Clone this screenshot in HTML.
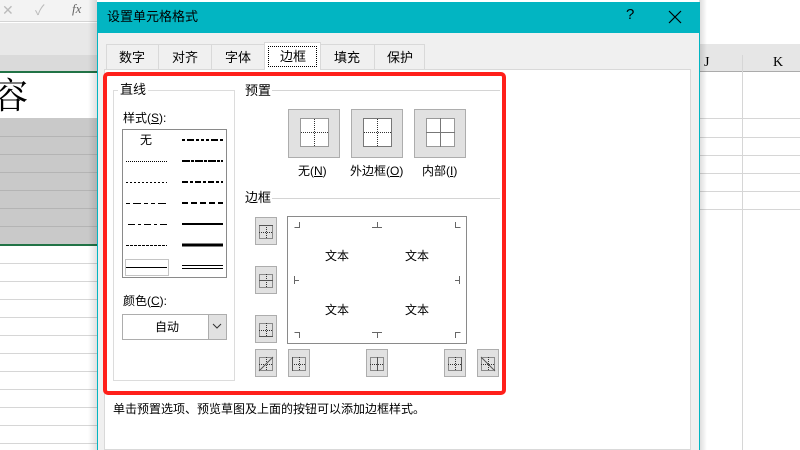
<!DOCTYPE html>
<html><head><meta charset="utf-8"><style>
*{margin:0;padding:0;box-sizing:border-box}
body{width:800px;height:450px;overflow:hidden;position:relative;background:#fff;font-family:"Liberation Sans","Noto Sans CJK SC",sans-serif;font-size:12px;color:#000}
.a{position:absolute}
.t{position:absolute;white-space:nowrap;font-size:12px;line-height:14px}
.btn{position:absolute;background:#e1e1e1;border:1px solid #adadad}
.sb{position:absolute;width:22px;height:28px;background:#e1e1e1;border:1px solid #adadad}
.hl{position:absolute;height:1px;background:#d4d4d4}
svg{shape-rendering:crispEdges}
</style></head><body>
<div class="a" style="left:0;top:0;width:97px;height:22px;background:#f3f3f3;border-bottom:1px solid #d4d4d4"></div>
<div class="t" style="left:2px;top:3px;color:#bbb;font-size:14px">✕</div>
<div class="t" style="left:35px;top:3px;color:#bbb;font-size:14px">✓</div>
<div class="t" style="left:72px;top:2px;color:#666;font-style:italic;font-family:'Liberation Serif',serif;font-size:13px">fx</div>
<div class="a" style="left:0;top:23px;width:97px;height:32px;background:#e8e8e8"></div>
<div class="a" style="left:0;top:55px;width:97px;height:16px;background:#dadada"></div>
<div class="a" style="left:0;top:71px;width:97px;height:2px;background:#217346"></div>
<div class="t" style="left:-8px;top:76px;font-size:36px;line-height:40px;font-family:'Liberation Serif','Noto Serif CJK SC',serif">容</div>
<div class="a" style="left:0;top:118px;width:97px;height:127px;background:#c9c9c9"></div>
<div class="a" style="left:0;top:244px;width:97px;height:2px;background:#217346"></div>
<svg class="a" style="left:0;top:0" width="97" height="450">
<g stroke="#b4b4b4" stroke-width="1">
<line x1="0" y1="136.5" x2="97" y2="136.5"/><line x1="0" y1="154.5" x2="97" y2="154.5"/><line x1="0" y1="172.5" x2="97" y2="172.5"/><line x1="0" y1="190.5" x2="97" y2="190.5"/><line x1="0" y1="208.5" x2="97" y2="208.5"/><line x1="0" y1="226.5" x2="97" y2="226.5"/>
</g>
<g stroke="#d6d6d6"><line x1="0" y1="263.5" x2="97" y2="263.5"/><line x1="0" y1="281.5" x2="97" y2="281.5"/><line x1="0" y1="299.5" x2="97" y2="299.5"/><line x1="0" y1="317.5" x2="97" y2="317.5"/><line x1="0" y1="335.5" x2="97" y2="335.5"/><line x1="0" y1="353.5" x2="97" y2="353.5"/><line x1="0" y1="371.5" x2="97" y2="371.5"/><line x1="0" y1="389.5" x2="97" y2="389.5"/><line x1="0" y1="407.5" x2="97" y2="407.5"/><line x1="0" y1="425.5" x2="97" y2="425.5"/><line x1="0" y1="443.5" x2="97" y2="443.5"/></g>
</svg>
<div class="a" style="left:88px;top:0;width:9px;height:450px;background:linear-gradient(to right,rgba(0,0,0,0),rgba(0,0,0,.12))"></div>
<div class="a" style="left:699px;top:44px;width:101px;height:28px;background:#e6e6e6;border-bottom:1px solid #ababab"></div>
<div class="t" style="left:704px;top:56px;font-family:'Liberation Serif',serif;font-size:14px">J</div>
<div class="t" style="left:773px;top:56px;font-family:'Liberation Serif',serif;font-size:14px">K</div>
<svg class="a" style="left:699px;top:0" width="101" height="450">
<line x1="43.5" y1="55" x2="43.5" y2="450" stroke="#d6d6d6"/>
<g stroke="#d6d6d6"><line x1="0" y1="118.5" x2="101" y2="118.5"/><line x1="0" y1="137.5" x2="101" y2="137.5"/><line x1="0" y1="155.5" x2="101" y2="155.5"/><line x1="0" y1="173.5" x2="101" y2="173.5"/><line x1="0" y1="191.5" x2="101" y2="191.5"/><line x1="0" y1="209.5" x2="101" y2="209.5"/></g>
</svg>
<div class="a" style="left:699px;top:0;width:8px;height:450px;background:linear-gradient(to right,rgba(0,0,0,.15),rgba(0,0,0,0))"></div>
<div class="a" style="left:97px;top:2px;width:603px;height:448px;background:#f0f0f0;border:1px solid #02b5c2;border-bottom:none"></div>
<div class="a" style="left:97px;top:2px;width:603px;height:31px;background:#02b5c2"></div>
<div class="t" style="left:107px;top:10px;font-size:13px">设置单元格格式</div>
<div class="t" style="left:626px;top:8px;font-size:15px">?</div>
<svg class="a" style="left:668px;top:10px;shape-rendering:auto" width="14" height="14"><path d="M1 1L13 13M13 1L1 13" stroke="#000" stroke-width="1.2"/></svg>
<div class="a" style="left:104px;top:69px;width:587px;height:381px;background:#fff;border:1px solid #d9d9d9"></div>
<div class="a" style="left:106px;top:44px;width:319px;height:25px;border:1px solid #d9d9d9;border-bottom:none"></div>
<div class="a" style="left:158px;top:44px;width:1px;height:25px;background:#d9d9d9"></div>
<div class="a" style="left:211px;top:44px;width:1px;height:25px;background:#d9d9d9"></div>
<div class="a" style="left:374px;top:44px;width:1px;height:25px;background:#d9d9d9"></div>
<div class="a" style="left:264px;top:42px;width:57px;height:28px;background:#fff;border:1px solid #d9d9d9;border-bottom:none"></div>
<div class="a" style="left:268px;top:46px;width:49px;height:21px;border:1px dotted #000"></div>
<div class="t" style="left:119px;top:51px;font-size:13px">数字</div>
<div class="t" style="left:172px;top:51px;font-size:13px">对齐</div>
<div class="t" style="left:225px;top:51px;font-size:13px">字体</div>
<div class="t" style="left:280px;top:50px;font-size:13px">边框</div>
<div class="t" style="left:334px;top:51px;font-size:13px">填充</div>
<div class="t" style="left:387px;top:51px;font-size:13px">保护</div>
<div class="a" style="left:113px;top:90px;width:122px;height:291px;border:1px solid #dcdcdc"></div>
<div class="t" style="left:118px;top:83px;background:#fff;padding:0 2px;font-size:13px">直线</div>
<div class="t" style="left:123px;top:111px">样式(<u>S</u>):</div>
<div class="a" style="left:122px;top:129px;width:105px;height:149px;border:1px solid #8a8a8a;background:#fff"></div>
<div class="t" style="left:140px;top:133px">无</div>
<svg class="a" style="left:122px;top:129px" width="105" height="149">
<g stroke="#000">
<line x1="4" y1="32.5" x2="45" y2="32.5" stroke-dasharray="1 1"/>
<line x1="4" y1="53.5" x2="45" y2="53.5" stroke-dasharray="2 2"/>
<line x1="4" y1="74.5" x2="45" y2="74.5" stroke-dasharray="4 3 8 3 4 3"/>
<line x1="6" y1="95.5" x2="45" y2="95.5" stroke-dasharray="7 3 3 3"/>
<line x1="4" y1="116.5" x2="45" y2="116.5" stroke-dasharray="3 1"/>
<line x1="4" y1="138.5" x2="45" y2="138.5"/>
<line x1="60" y1="11" x2="101" y2="11" stroke-width="2" stroke-dasharray="3 2 7 2 3 2 3 2"/>
<line x1="60" y1="32" x2="101" y2="32" stroke-width="2" stroke-dasharray="8 1 3 1"/>
<line x1="60" y1="53" x2="101" y2="53" stroke-width="2" stroke-dasharray="6 2 3 2"/>
<line x1="60" y1="74" x2="101" y2="74" stroke-width="2" stroke-dasharray="6 3"/>
<line x1="60" y1="95" x2="101" y2="95" stroke-width="2"/>
<line x1="60" y1="116" x2="101" y2="116" stroke-width="3"/>
<line x1="60" y1="136.5" x2="101" y2="136.5"/><line x1="60" y1="139.5" x2="101" y2="139.5"/>
</g>
<rect x="3.5" y="130.5" width="43" height="16" fill="none" stroke="#888" stroke-dasharray="1 1"/>
</svg>
<div class="t" style="left:123px;top:294px">颜色(<u>C</u>):</div>
<div class="a" style="left:122px;top:314px;width:105px;height:26px;border:1px solid #adadad;background:#fff"></div>
<div class="a" style="left:208px;top:315px;width:18px;height:24px;background:#e1e1e1;border-left:1px solid #adadad"></div>
<svg class="a" style="left:212px;top:323px;shape-rendering:auto" width="10" height="6"><path d="M1 1L5 5L9 1" stroke="#333" fill="none"/></svg>
<div class="t" style="left:155px;top:320px">自动</div>
<div class="t" style="left:245px;top:84px;font-size:13px">预置</div>
<div class="hl" style="left:272px;top:90px;width:228px"></div>
<div class="btn" style="left:288px;top:109px;width:52px;height:49px"></div>
<div class="btn" style="left:351px;top:109px;width:52px;height:49px"></div>
<div class="btn" style="left:414px;top:109px;width:52px;height:49px"></div>
<div class="sb" style="left:255px;top:217px"></div>
<div class="sb" style="left:255px;top:266px"></div>
<div class="sb" style="left:255px;top:315px"></div>
<div class="sb" style="left:255px;top:349px"></div>
<div class="sb" style="left:288px;top:349px"></div>
<div class="sb" style="left:366px;top:349px"></div>
<div class="sb" style="left:444px;top:349px"></div>
<div class="sb" style="left:477px;top:349px"></div>
<svg class="a" style="left:0;top:0" width="520" height="400">
<g fill="#fff"><rect x="300" y="118" width="29" height="29"/><rect x="363" y="118" width="29" height="29"/><rect x="426" y="118" width="29" height="29"/></g>
<g stroke="#333" stroke-dasharray="1 1" fill="none">
<rect x="300.5" y="118.5" width="28" height="28"/><line x1="314.5" y1="119" x2="314.5" y2="147"/><line x1="301" y1="132.5" x2="329" y2="132.5"/>
<line x1="377.5" y1="119" x2="377.5" y2="147"/><line x1="364" y1="132.5" x2="392" y2="132.5"/>
<rect x="426.5" y="118.5" width="28" height="28"/>
</g>
<g stroke="#777" fill="none"><rect x="363.5" y="118.5" width="28" height="28"/><line x1="440.5" y1="118" x2="440.5" y2="147"/><line x1="426" y1="132.5" x2="455" y2="132.5"/></g>
<rect x="287.5" y="216.5" width="179" height="127" fill="#fff" stroke="#8a8a8a"/>
<g stroke="#666" fill="none">
<path d="M299.5 222v5.5h-5M377.5 222v5.5M372 227.5h10M455.5 222v5.5h5M299.5 338v-5.5h-5M377.5 338v-5.5M372 332.5h10M455.5 338v-5.5h5M294 280.5h5M294.5 276v8M460 280.5h-5M459.5 276v8"/>
</g>
<g stroke="#333" stroke-dasharray="1 1" fill="none">
<rect x="259.5" y="225.5" width="13" height="13"/><rect x="259.5" y="274.5" width="13" height="13"/><rect x="259.5" y="323.5" width="13" height="13"/>
<rect x="259.5" y="357.5" width="13" height="13"/><rect x="292.5" y="357.5" width="13" height="13"/><rect x="370.5" y="357.5" width="13" height="13"/><rect x="448.5" y="357.5" width="13" height="13"/><rect x="481.5" y="357.5" width="13" height="13"/>
<line x1="266.5" y1="225" x2="266.5" y2="239"/><line x1="259" y1="232.5" x2="273" y2="232.5"/>
<line x1="266.5" y1="274" x2="266.5" y2="288"/>
<line x1="266.5" y1="323" x2="266.5" y2="337"/><line x1="259" y1="330.5" x2="273" y2="330.5"/>
<line x1="259" y1="364.5" x2="273" y2="364.5"/><line x1="266.5" y1="357" x2="266.5" y2="371"/>
<line x1="292" y1="364.5" x2="306" y2="364.5"/><line x1="299.5" y1="357" x2="299.5" y2="371"/>
<line x1="370" y1="364.5" x2="384" y2="364.5"/><line x1="448" y1="364.5" x2="462" y2="364.5"/><line x1="455.5" y1="357" x2="455.5" y2="371"/>
<line x1="488.5" y1="357" x2="488.5" y2="371"/><line x1="481" y1="364.5" x2="495" y2="364.5"/>
</g>
<g stroke="#555" fill="none">
<line x1="259" y1="225.5" x2="273" y2="225.5"/><line x1="259" y1="280.5" x2="273" y2="280.5"/><line x1="259" y1="336.5" x2="273" y2="336.5"/>
<line x1="292.5" y1="357" x2="292.5" y2="371"/><line x1="377.5" y1="357" x2="377.5" y2="371"/><line x1="461.5" y1="357" x2="461.5" y2="371"/>
</g>
<g stroke="#555" fill="none" style="shape-rendering:auto"><line x1="259" y1="371" x2="273" y2="357"/><line x1="481" y1="357" x2="495" y2="371"/></g>
</svg>
<div class="t" style="left:298px;top:164px">无(<u>N</u>)</div>
<div class="t" style="left:350px;top:164px">外边框(<u>O</u>)</div>
<div class="t" style="left:422px;top:164px">内部(<u>I</u>)</div>
<div class="t" style="left:245px;top:191px;font-size:13px">边框</div>
<div class="hl" style="left:272px;top:198px;width:228px"></div>
<div class="t" style="left:325px;top:249px">文本</div>
<div class="t" style="left:405px;top:249px">文本</div>
<div class="t" style="left:325px;top:303px">文本</div>
<div class="t" style="left:405px;top:303px">文本</div>
<div class="t" style="left:113px;top:402px">单击预置选项、预览草图及上面的按钮可以添加边框样式。</div>
<div class="a" style="left:103px;top:72px;width:403px;height:323px;border:4px solid #ff1f1a;border-radius:5px"></div>
</body></html>
